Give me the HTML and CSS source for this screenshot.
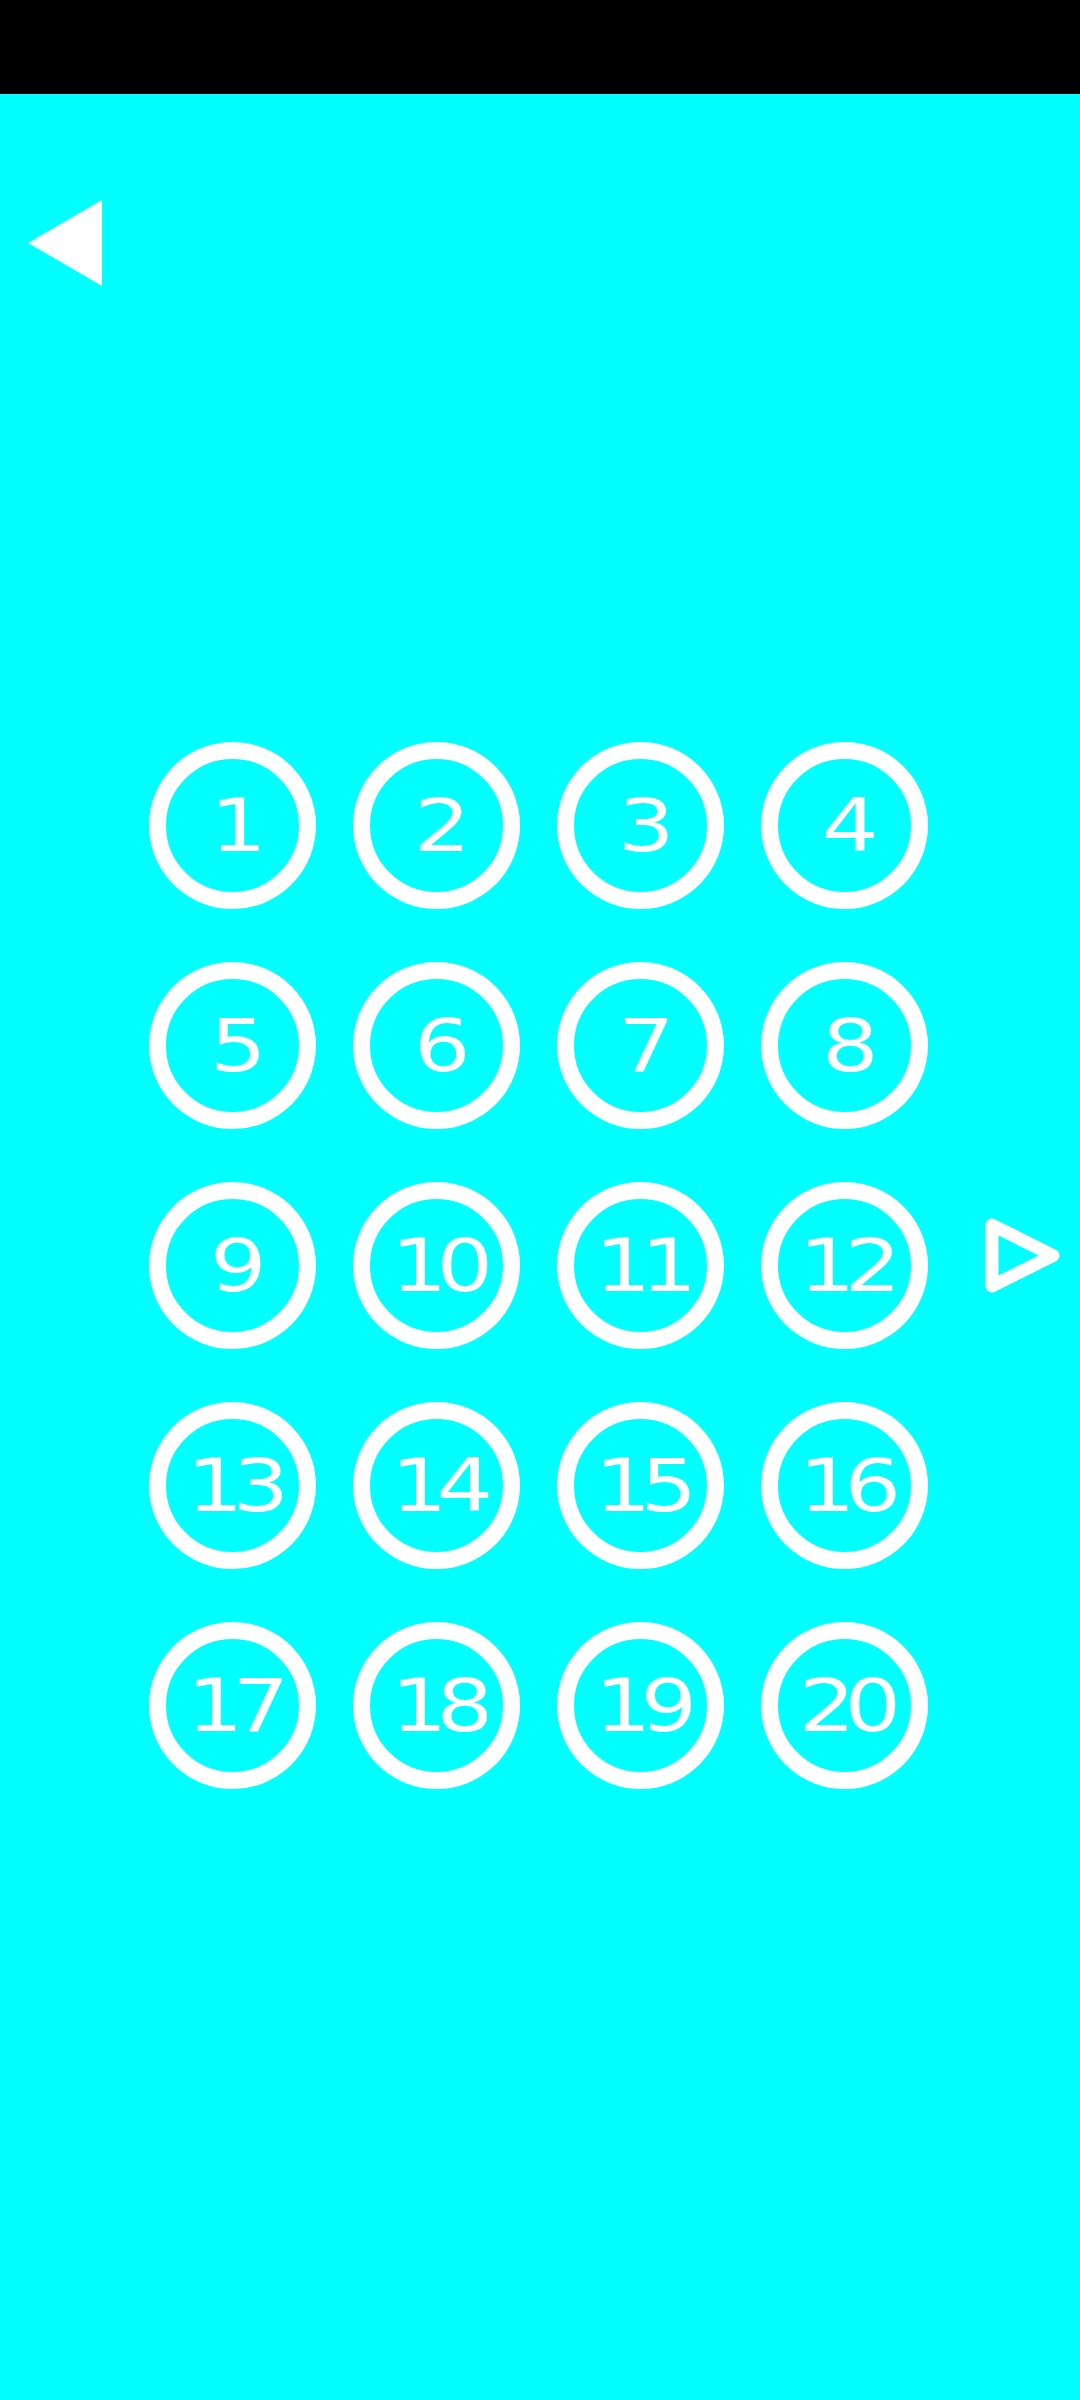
FILE: index.html
```html
<!DOCTYPE html>
<html lang="en">
<head>
  <meta charset="UTF-8" />
  <title>Levels</title>
  <link rel="stylesheet" href="styles.css">
</head>
<body>
  <div class="statusbar"></div>

  <div class="top">
    <button class="back" aria-label="Back">
      <svg width="74" height="86" viewBox="0 0 74 86">
        <polygon points="0,43 74,0 74,86" fill="#fff" />
      </svg>
    </button>
  </div>

  <div class="levels">
    <div class="grid" id="grid"></div>
    <button class="next" aria-label="Next">
      <svg width="75" height="75" viewBox="0 0 75 75">
        <polygon points="7,7 7,68 68,37.5" fill="none" stroke="#fff" stroke-width="13" stroke-linejoin="round" />
      </svg>
    </button>
  </div>

  <script>
    const grid = document.getElementById("grid");
    for (let i = 1; i <= 20; i++) {
      const btn = document.createElement("button");
      btn.className = "level";
      btn.innerHTML = `<span>${i}</span>`;
      grid.appendChild(btn);
    }
  </script>
</body>
</html>
```

FILE: styles.css
```css
body {
  margin: 0;
  background-color: #00ffff;
  font-family: "DejaVu Sans", sans-serif;
  height: 2400px;
}
button {
  background: none;
  border: none;
  padding: 0;
  margin: 0;
  cursor: pointer;
}
.statusbar {
  height: 94px;
  background-color: #000;
}
.top {
  padding: 106px 0 0 28px;
  height: 86px;
}
.back svg,
.next svg {
  display: block;
}
.levels {
  display: flex;
  align-items: center;
  margin-top: 456px;
  padding-left: 149px;
}
.grid {
  display: grid;
  grid-template-columns: repeat(4, 167px);
  grid-auto-rows: 167px;
  column-gap: 37px;
  row-gap: 53px;
}
.level {
  width: 167px;
  height: 167px;
  box-sizing: border-box;
  border: 17px solid #fff;
  border-radius: 50%;
  display: flex;
  align-items: center;
  justify-content: center;
  color: #fff;
  font-family: "DejaVu Sans", sans-serif;
  font-size: 73px;
  line-height: 1;
  letter-spacing: -9px;
}
.level span {
  display: block;
  transform: scaleX(1.22);
}
.next {
  margin-left: 57px;
  margin-bottom: 20px;
}
```
